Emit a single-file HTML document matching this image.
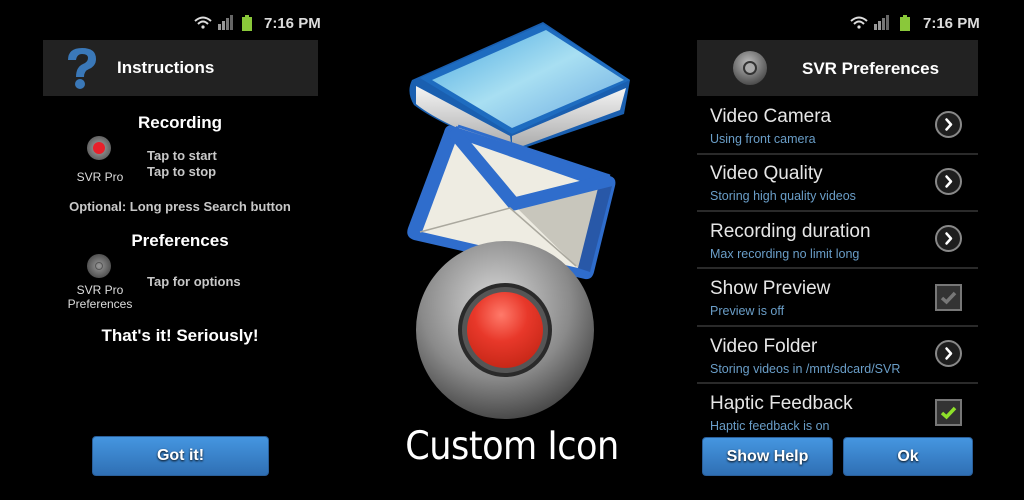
<!DOCTYPE html>
<html><head><meta charset="utf-8"><style>
*{margin:0;padding:0;box-sizing:border-box}
body{width:1024px;height:500px;background:#000;position:relative;overflow:hidden;font-family:"Liberation Sans","DejaVu Sans",sans-serif;color:#fff}
.a{position:absolute;white-space:nowrap}
.c{transform:translateX(-50%)}
.b{font-weight:bold}
.hdr{position:absolute;background:#222;height:56px;top:40px}
.t{font-size:19px;color:#e6e6e6}
.s{font-size:12.5px;color:#6a9ec8}
.div{position:absolute;left:697px;width:281px;height:2px;background:#2a2a2a}
.arr{position:absolute;left:935px;width:27px;height:27px;border-radius:50%;border:2px solid #888;background:#1e1e1e}
.chk{position:absolute;left:935px;width:27px;height:27px;border:2px solid #777;background:#333}
.btn{position:absolute;border-radius:4px;background:linear-gradient(#4596e0,#2f6fb4);border:1px solid #2a5f9a;color:#fff;font-weight:bold;font-size:16px;text-align:center;line-height:38px;text-shadow:0 1px 2px #000}
.gray{color:#c8c8c8;font-size:13px;font-weight:bold}
</style></head><body>

<svg class="a" style="left:193px;top:14px" width="70" height="18" viewBox="0 0 70 18">
<path d="M2 7 Q10 0 18 7" stroke="#ddd" stroke-width="2" fill="none"/><path d="M5 10 Q10 5 15 10" stroke="#ddd" stroke-width="2" fill="none"/><circle cx="10" cy="13" r="1.6" fill="#ddd"/>
<rect x="25" y="10" width="3" height="6" fill="#999"/><rect x="29" y="7" width="3" height="9" fill="#999"/><rect x="33" y="4" width="3" height="12" fill="#777"/><rect x="37" y="1" width="3" height="15" fill="#666"/>
<rect x="49" y="3" width="10" height="14" fill="#8ac83a"/><rect x="52" y="1" width="4" height="2" fill="#8ac83a"/>
</svg>
<div class="a b" style="left:264px;top:15px;font-size:15px;color:#ddd">7:16 PM</div>
<svg class="a" style="left:849px;top:14px" width="70" height="18" viewBox="0 0 70 18">
<path d="M2 7 Q10 0 18 7" stroke="#ddd" stroke-width="2" fill="none"/><path d="M5 10 Q10 5 15 10" stroke="#ddd" stroke-width="2" fill="none"/><circle cx="10" cy="13" r="1.6" fill="#ddd"/>
<rect x="25" y="10" width="3" height="6" fill="#999"/><rect x="29" y="7" width="3" height="9" fill="#999"/><rect x="33" y="4" width="3" height="12" fill="#777"/><rect x="37" y="1" width="3" height="15" fill="#666"/>
<rect x="51" y="3" width="10" height="14" fill="#8ac83a"/><rect x="54" y="1" width="4" height="2" fill="#8ac83a"/>
</svg>
<div class="a b" style="left:923px;top:15px;font-size:15px;color:#ddd">7:16 PM</div>

<div class="hdr" style="left:43px;width:275px"></div>
<svg class="a" style="left:63px;top:46px" width="38" height="44" viewBox="0 0 36 44">
<path d="M4 14 Q4 2 18 2 Q32 2 32 13 Q32 20 25 23 Q20 25 20 31 L12 31 Q12 21 19 18 Q24 16 24 12 Q24 8 18 8 Q13 8 12 14 Z" fill="#3a78b8"/>
<circle cx="16" cy="38" r="5" fill="#3a78b8"/>
</svg>
<div class="a b" style="left:117px;top:58px;font-size:17px">Instructions</div>
<div class="a b c" style="left:180px;top:113px;font-size:17px">Recording</div>
<div class="a" style="left:87px;top:136px;width:24px;height:24px;border-radius:50%;background:radial-gradient(#aaa,#444)"></div>
<div class="a" style="left:93px;top:142px;width:12px;height:12px;border-radius:50%;background:#e8202a"></div>
<div class="a c" style="left:100px;top:170px;font-size:12px;color:#ddd">SVR Pro</div>
<div class="a gray" style="left:147px;top:148px">Tap to start</div>
<div class="a gray" style="left:147px;top:164px">Tap to stop</div>
<div class="a gray c" style="left:180px;top:199px">Optional: Long press Search button</div>
<div class="a b c" style="left:180px;top:231px;font-size:17px">Preferences</div>
<div class="a" style="left:87px;top:254px;width:24px;height:24px;border-radius:50%;background:radial-gradient(#999,#333)"></div>
<div class="a" style="left:95px;top:262px;width:8px;height:8px;border-radius:50%;border:1.5px solid #555"></div>
<div class="a c" style="left:100px;top:283px;font-size:12px;color:#ddd">SVR Pro</div>
<div class="a c" style="left:100px;top:297px;font-size:12px;color:#ddd">Preferences</div>
<div class="a gray" style="left:147px;top:274px">Tap for options</div>
<div class="a b c" style="left:180px;top:326px;font-size:17px">That's it! Seriously!</div>
<div class="btn" style="left:92px;top:436px;width:177px;height:40px">Got it!</div>

<svg class="a" style="left:380px;top:10px" width="270" height="430" viewBox="380 10 270 430">
<defs>
<linearGradient id="bk" x1="0" y1="0" x2="1" y2="1"><stop offset="0" stop-color="#4aa8e0"/><stop offset=".5" stop-color="#a8dff2"/><stop offset="1" stop-color="#6aa8e0"/></linearGradient>
<linearGradient id="pg" x1="0" y1="0" x2="0" y2="1"><stop offset="0" stop-color="#f4f4f4"/><stop offset="1" stop-color="#a8a8a8"/></linearGradient>
<radialGradient id="gr" cx=".45" cy=".35" r=".7"><stop offset="0" stop-color="#d8d8d8"/><stop offset=".6" stop-color="#8a8a8a"/><stop offset="1" stop-color="#3c3c3c"/></radialGradient>
<radialGradient id="rd" cx=".45" cy=".3" r=".7"><stop offset="0" stop-color="#ff7a6a"/><stop offset=".5" stop-color="#e8382a"/><stop offset="1" stop-color="#c82818"/></radialGradient>
</defs>
<path d="M412 80 L543 22 L630 80 L624 114 L512 152 Q440 125 414 105 Q406 92 412 80 Z" fill="#1a5fb0"/>
<path d="M416 86 L510 136 L512 150 Q440 124 416 104 Z" fill="url(#pg)"/>
<path d="M512 136 L626 88 L620 110 L512 150 Z" fill="url(#pg)"/>
<path d="M420 78 L543 24 L630 80 L512 134 Z" fill="#1e6cc0"/>
<path d="M432 80 L546 30 L624 80 L512 128 Z" fill="url(#bk)"/>
<path d="M452 126 Q446 124 444 132 L408 228 Q405 237 414 240 L585 279 Q592 280 594 272 L615 186 Q617 178 610 176 Z" fill="#2f6dcc"/>
<path d="M457 138 L422 232 L578 268 L600 188 Z" fill="#eeece2"/>
<path d="M515 206 L600 188 L578 268 Z" fill="#c8c6bc"/>
<path d="M598 188 L578 268 L590 272 L612 186 Z" fill="#2858a8"/>
<path d="M452 130 L514 204 L610 180" stroke="#2f6dcc" stroke-width="13" fill="none" stroke-linejoin="round"/>
<path d="M458 126 L610 176" stroke="#2f6dcc" stroke-width="3" fill="none"/>
<path d="M420 232 L510 208 L576 266" stroke="#aaa89e" stroke-width="1.5" fill="none"/>
<circle cx="505" cy="330" r="89" fill="url(#gr)"/>
<circle cx="505" cy="330" r="47" fill="#2a2a2a"/>
<circle cx="505" cy="330" r="43" fill="#555"/>
<circle cx="505" cy="330" r="38" fill="url(#rd)"/>
</svg>
<div class="a c" style="left:512px;top:424px;font-size:39px;letter-spacing:-0.5px;font-family:'DejaVu Sans Condensed','DejaVu Sans',sans-serif;color:#fff">Custom Icon</div>

<div class="hdr" style="left:697px;width:281px"></div>
<div class="a" style="left:733px;top:51px;width:34px;height:34px;border-radius:50%;background:radial-gradient(circle at 45% 35%,#bbb,#555 70%,#2a2a2a)"></div>
<div class="a" style="left:743px;top:61px;width:14px;height:14px;border-radius:50%;border:2px solid #333;background:#aaa"></div>
<div class="a b" style="left:802px;top:59px;font-size:17px">SVR Preferences</div>

<div class="a t" style="left:710px;top:106px">Video Camera</div>
<div class="a s" style="left:710px;top:132px">Using front camera</div>
<div class="arr" style="top:111px"><svg width="23" height="23" viewBox="0 0 23 23" style="position:absolute;left:0;top:0"><path d="M9.5 6.5 L14 11.5 L9.5 16.5" stroke="#fff" stroke-width="2.5" fill="none" stroke-linecap="round" stroke-linejoin="round"/></svg></div>
<div class="div" style="top:153px"></div>
<div class="a t" style="left:710px;top:163px">Video Quality</div>
<div class="a s" style="left:710px;top:189px">Storing high quality videos</div>
<div class="arr" style="top:168px"><svg width="23" height="23" viewBox="0 0 23 23" style="position:absolute;left:0;top:0"><path d="M9.5 6.5 L14 11.5 L9.5 16.5" stroke="#fff" stroke-width="2.5" fill="none" stroke-linecap="round" stroke-linejoin="round"/></svg></div>
<div class="div" style="top:210px"></div>
<div class="a t" style="left:710px;top:221px">Recording duration</div>
<div class="a s" style="left:710px;top:247px">Max recording no limit long</div>
<div class="arr" style="top:225px"><svg width="23" height="23" viewBox="0 0 23 23" style="position:absolute;left:0;top:0"><path d="M9.5 6.5 L14 11.5 L9.5 16.5" stroke="#fff" stroke-width="2.5" fill="none" stroke-linecap="round" stroke-linejoin="round"/></svg></div>
<div class="div" style="top:267px"></div>
<div class="a t" style="left:710px;top:278px">Show Preview</div>
<div class="a s" style="left:710px;top:304px">Preview is off</div>
<div class="chk" style="top:284px"><svg width="23" height="23" viewBox="0 0 23 23" style="position:absolute;left:0;top:0"><path d="M5 12 L9.5 16 L18 7" stroke="#777" stroke-width="3.5" fill="none"/></svg></div>
<div class="div" style="top:325px"></div>
<div class="a t" style="left:710px;top:336px">Video Folder</div>
<div class="a s" style="left:710px;top:362px">Storing videos in /mnt/sdcard/SVR</div>
<div class="arr" style="top:340px"><svg width="23" height="23" viewBox="0 0 23 23" style="position:absolute;left:0;top:0"><path d="M9.5 6.5 L14 11.5 L9.5 16.5" stroke="#fff" stroke-width="2.5" fill="none" stroke-linecap="round" stroke-linejoin="round"/></svg></div>
<div class="div" style="top:382px"></div>
<div class="a t" style="left:710px;top:393px">Haptic Feedback</div>
<div class="a s" style="left:710px;top:419px">Haptic feedback is on</div>
<div class="chk" style="top:399px"><svg width="23" height="23" viewBox="0 0 23 23" style="position:absolute;left:0;top:0"><path d="M5 12 L9.5 16 L18 7" stroke="#8ee02a" stroke-width="3.5" fill="none"/></svg></div>
<div class="btn" style="left:702px;top:437px;width:131px;height:39px">Show Help</div>
<div class="btn" style="left:843px;top:437px;width:130px;height:39px">Ok</div>
</body></html>
